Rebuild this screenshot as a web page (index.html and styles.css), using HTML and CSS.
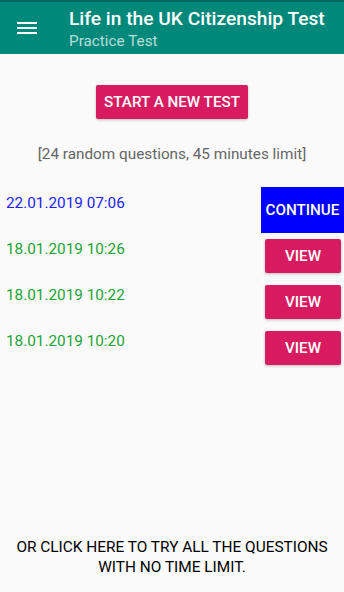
FILE: index.html
```html
<!DOCTYPE html>
<html>
<head>
<meta charset="utf-8">
<link rel="stylesheet" href="styles.css">
</head>
<body>
<div class="page">
  <div class="statusbar"></div>
  <header class="toolbar">
    <div class="menu">
      <svg width="20" height="14" viewBox="0 0 20 14"><rect x="0" y="0" width="20" height="2" fill="#fff"/><rect x="0" y="5" width="20" height="2" fill="#fff"/><rect x="0" y="10" width="20" height="2" fill="#fff"/></svg>
    </div>
    <div class="titles">
      <div class="title">Life in the UK Citizenship Test</div>
      <div class="subtitle">Practice Test</div>
    </div>
  </header>
  <main class="content">
    <div class="start-wrap"><button class="btn btn-start">START A NEW TEST</button></div>
    <p class="info">[24 random questions, 45 minutes limit]</p>
    <div class="list">
      <div class="row">
        <span class="date date-current">22.01.2019 07:06</span>
        <button class="btn btn-continue">CONTINUE</button>
      </div>
      <div class="row">
        <span class="date date-done">18.01.2019 10:26</span>
        <button class="btn btn-view">VIEW</button>
      </div>
      <div class="row">
        <span class="date date-done">18.01.2019 10:22</span>
        <button class="btn btn-view">VIEW</button>
      </div>
      <div class="row">
        <span class="date date-done">18.01.2019 10:20</span>
        <button class="btn btn-view">VIEW</button>
      </div>
    </div>
    <p class="all-questions">OR CLICK HERE TO TRY ALL THE QUESTIONS<br>WITH NO TIME LIMIT.</p>
  </main>
</div>
</body>
</html>
```

FILE: styles.css
```css
html, body {
  margin: 0;
  padding: 0;
  background: #fafafa;
  font-family: Roboto, "Noto Sans", sans-serif;
}
.page {
  height: 100vh;
  display: flex;
  flex-direction: column;
}
.statusbar {
  height: 2px;
  background: #00695c;
}
.toolbar {
  height: 52px;
  background: #00897b;
  display: flex;
  align-items: flex-start;
  box-sizing: border-box;
}
.menu {
  width: 69px;
  padding: 20px 0 0 17px;
  box-sizing: border-box;
  line-height: 0;
}
.titles {
  padding-top: 5px;
}
.title {
  color: #fff;
  font-size: 19.2px;
  font-weight: 500;
  line-height: 23px;
}
.subtitle {
  color: rgba(255,255,255,0.72);
  font-size: 15.3px;
  line-height: 18px;
  margin-top: 2px;
}
.content {
  flex: 1;
  display: flex;
  flex-direction: column;
}
.start-wrap {
  display: flex;
  justify-content: center;
  padding-top: 31px;
}
.btn {
  border: none;
  color: #fff;
  font-family: Roboto, "Noto Sans", sans-serif;
  font-weight: 500;
  font-size: 15.2px;
  padding: 0;
  cursor: pointer;
}
.btn-start {
  width: 152px;
  height: 34px;
  background: #d81b60;
  border-radius: 2px;
  box-shadow: 0 1px 3px rgba(0,0,0,0.25);
}
.info {
  margin: 26px 0 0;
  text-align: center;
  font-size: 15.3px;
  line-height: 18px;
  color: #666;
}
.list {
  margin-top: 24px;
  display: flex;
  flex-direction: column;
}
.row {
  height: 46px;
  display: flex;
  justify-content: space-between;
  align-items: flex-start;
}
.date {
  padding: 7px 0 0 6px;
  font-size: 15.3px;
  line-height: 18px;
}
.date-current { color: #2222ff; }
.date-done { color: #22a336; }
.btn-continue {
  width: 83px;
  height: 46px;
  background: #0000ff;
}
.btn-view {
  width: 76px;
  height: 34px;
  margin: 6px 3px 0 0;
  background: #d81b60;
  border-radius: 2px;
  box-shadow: 0 1px 3px rgba(0,0,0,0.25);
}
.all-questions {
  margin: auto 0 0;
  padding-bottom: 15px;
  text-align: center;
  font-size: 15.4px;
  line-height: 20px;
  color: #000;
}
```
